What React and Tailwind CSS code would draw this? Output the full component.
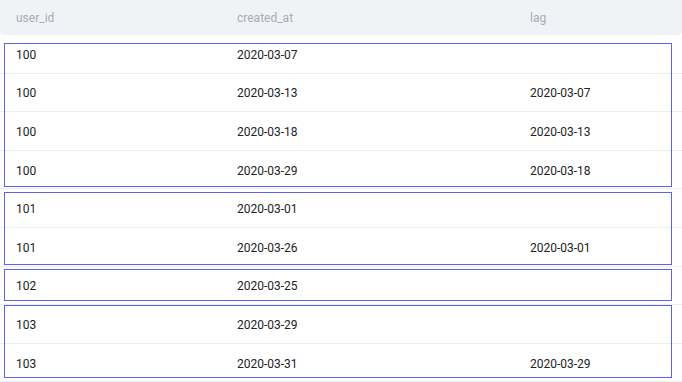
export default function App() {
  const rows = [
    ["100", "2020-03-07", ""],
    ["100", "2020-03-13", "2020-03-07"],
    ["100", "2020-03-18", "2020-03-13"],
    ["100", "2020-03-29", "2020-03-18"],
    ["101", "2020-03-01", ""],
    ["101", "2020-03-26", "2020-03-01"],
    ["102", "2020-03-25", ""],
    ["103", "2020-03-29", ""],
    ["103", "2020-03-31", "2020-03-29"],
  ];

  // hand-drawn group outlines sitting over the table
  const groups = [
    { top: "top-[43px]", height: "h-[144px]" },
    { top: "top-[192px]", height: "h-[73px]" },
    { top: "top-[269px]", height: "h-[32px]" },
    { top: "top-[305px]", height: "h-[73px]" },
  ];

  return (
    <div className="relative w-[682px] h-[382px] bg-white overflow-hidden font-['Roboto',sans-serif] text-[12px]">
      <div className="grid grid-cols-[221px_293px_1fr] h-[35px] items-center bg-[#f0f3f6] rounded-b-[4px] text-[#a4adb8]">
        <p className="px-4">user_id</p>
        <p className="px-4">created_at</p>
        <p className="px-4">lag</p>
      </div>

      <div className="flex flex-col">
        {rows.map((row, index) => (
          <div
            key={index}
            className="grid grid-cols-[221px_293px_1fr] h-[38.6px] pt-[2px] items-center border-b border-[#ebeef2] text-[#222222]"
          >
            <p className="px-4">{row[0]}</p>
            <p className="px-4">{row[1]}</p>
            <p className="px-4">{row[2]}</p>
          </div>
        ))}
      </div>

      {groups.map((group, index) => (
        <div
          key={index}
          className={`absolute left-[4px] w-[668px] ${group.top} ${group.height} border-[1.5px] border-[#5f5ff2]`}
        />
      ))}
    </div>
  );
}
